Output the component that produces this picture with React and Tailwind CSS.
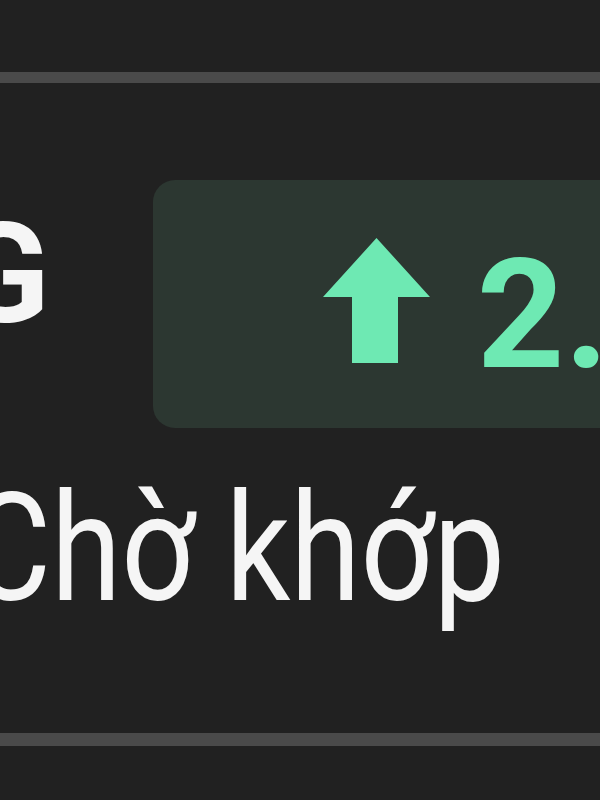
export default function App() {
  return (
    <div className="w-[600px] h-[800px] bg-[#212121] overflow-hidden flex flex-col font-['Roboto',sans-serif]">
      <div className="h-[72px] shrink-0" />
      <div className="h-[11px] shrink-0 bg-[#4a4a4a]" />

      <div className="mt-[97px] flex items-start shrink-0">
        <span className="-ml-[45px] mr-[103px] mt-[25px] text-[139px] leading-none font-bold text-[#f5f5f5]">
          G
        </span>
        <div className="w-[600px] h-[248px] shrink-0 rounded-[22px] bg-[#2c3731] flex items-start pl-[170px]">
          <svg className="mt-[58px] shrink-0" width="107" height="125" viewBox="0 0 107 125">
            <polygon
              points="0,59 53.5,0 107,59 75,59 75,125 29,125 29,59"
              fill="#6ee9b3"
            />
          </svg>
          <span className="ml-[47px] mt-[58px] text-[153px] leading-none font-bold text-[#6ee9b3] whitespace-nowrap">
            2.5%
          </span>
        </div>
      </div>

      <div className="mt-[46px] -ml-[32px] origin-left scale-x-[0.85] text-[150px] leading-none text-[#f5f5f5] whitespace-nowrap shrink-0">
        Chờ khớp
      </div>

      <div className="mt-[109px] h-[13px] shrink-0 bg-[#4a4a4a]" />
    </div>
  );
}
